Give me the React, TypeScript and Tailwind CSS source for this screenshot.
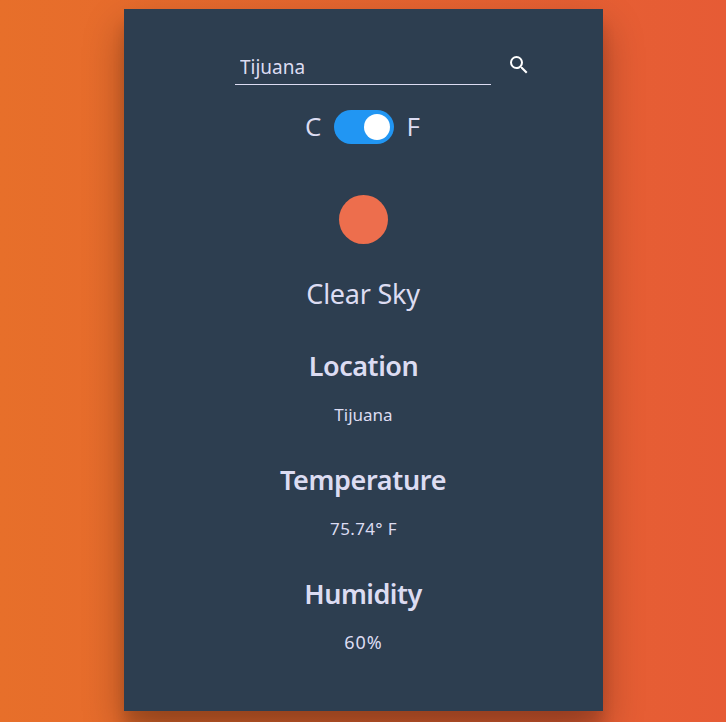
export default function App() {
  return (
    <div className="h-[722px] w-[726px] overflow-hidden bg-linear-to-r from-[#e76f2a] to-[#e65b35] pt-[9px] font-['Noto_Sans',sans-serif] text-[#dcdcf2]">
      <main className="ml-[124px] flex h-[702px] w-[479px] flex-col items-center bg-[#2d3e50] shadow-[0_19px_38px_rgba(0,0,0,0.3),0_15px_12px_rgba(0,0,0,0.12)]">
        <form className="mt-[41px] ml-[44px] flex h-[35px] w-[301px]" onSubmit={(e) => e.preventDefault()}>
          <input className="h-[35px] w-[256px] border-b border-[#dcdcf2] px-[5px] text-[19px] outline-none" defaultValue="Tijuana" aria-label="City" />
          <button className="ml-4 flex h-[29px] w-6 items-center justify-center text-white" aria-label="Search">
            <svg className="size-6 shrink-0" viewBox="0 0 24 24" fill="currentColor"><path d="M15.5 14h-.79l-.28-.27A6.47 6.47 0 0 0 16 9.5 6.5 6.5 0 1 0 9.5 16c1.61 0 3.09-.59 4.23-1.57l.27.28v.79l5 4.99L20.49 19l-4.99-5zm-6 0C7.01 14 5 11.99 5 9.5S7.01 5 9.5 5 14 7.01 14 9.5 11.99 14 9.5 14z" /></svg>
          </button>
        </form>
        <div className="mt-[25px] mr-[2px] flex h-[34px] items-center font-['Open_Sans','Noto_Sans',sans-serif] text-[26px] leading-[34px]">
          <span className="-mt-[2px]">C</span>
          <span className="mr-[12px] ml-[13px] flex h-[34px] w-[60px] items-center justify-end rounded-full bg-[#2196f3] pr-1"><span className="size-[26px] rounded-full bg-white" /></span>
          <span className="-mt-[2px]">F</span>
        </div>
        <div className="mt-[51px] size-[49px] shrink-0 rounded-full bg-[#ed6e4d]" />
        <p className="mt-[31px] mr-px text-[27px] leading-[38px] tracking-[-0.25px]">Clear Sky</p>
        <h2 className="mt-[34px] text-[27px] leading-[38px] font-semibold tracking-[-0.45px]">Location</h2>
        <p className="mt-[18px] text-[17px] leading-6">Tijuana</p>
        <h2 className="mt-[34px] mr-px text-[27px] leading-[38px] font-semibold tracking-[-0.35px]">Temperature</h2>
        <p className="mt-[18px] text-[17px] leading-6 tracking-[0.35px]">75.74° F</p>
        <h2 className="mt-[34px] mr-px text-[27px] leading-[38px] font-semibold tracking-[-0.5px]">Humidity</h2>
        <p className="mt-[17px] text-[18px] leading-6 tracking-[1px]">60%</p>
      </main>
    </div>
  );
}
